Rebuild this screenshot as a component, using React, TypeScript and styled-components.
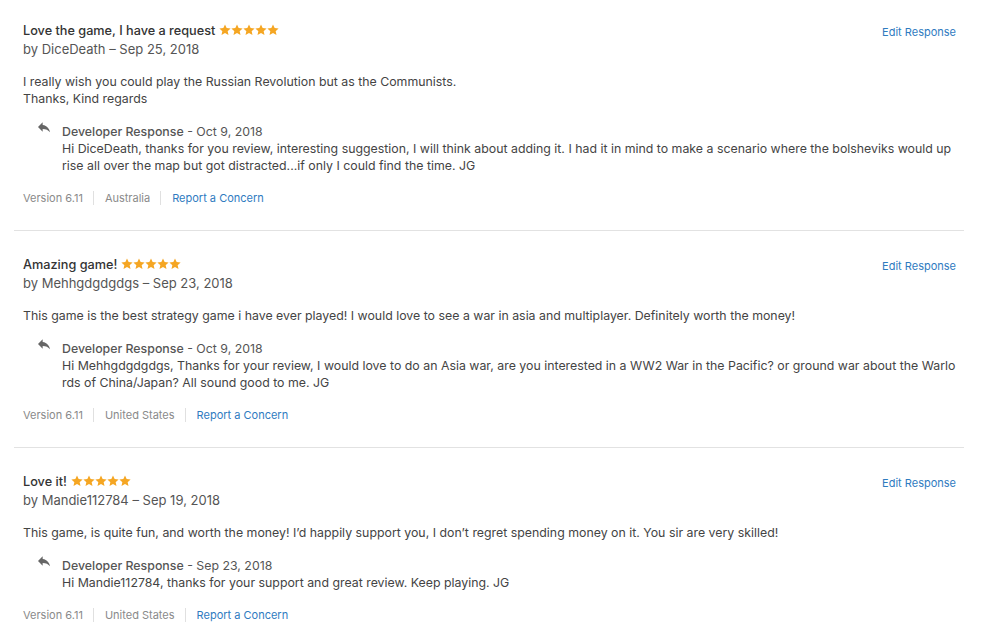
import React from 'react'
import styled, { createGlobalStyle } from 'styled-components'

const GlobalStyle = createGlobalStyle`
  body {
    margin: 0;
    background: #fff;
    font-family: Inter, "Open Sans", sans-serif;
    -webkit-font-smoothing: antialiased;
  }
`

const ListUI = styled.div`
  width: 950px;
  margin-left: 14px;
  padding-top: 22px;
`
const ReviewUI = styled.section`
  padding: 0 8px 24px 9px;
  border-bottom: 1px solid #e2e2e2;
  margin-bottom: 25px;
  &:last-child {
    border-bottom: none;
  }
`
const HeaderUI = styled.div`
  display: flex;
  justify-content: space-between;
  align-items: flex-start;
`
const TitleUI = styled.h3`
  margin: 0;
  font-size: 12.7px;
  line-height: 18px;
  font-weight: 500;
  color: #333;
  display: flex;
  align-items: center;
  gap: 4px;
`
const StarsUI = styled.span`
  display: inline-flex;
  margin-top: -3px;
`
const LinkUI = styled.a`
  font-size: 11px;
  color: #2f7bbf;
  text-decoration: none;
  line-height: 18px;
  margin-top: 1px;
  cursor: pointer;
`
const ByUI = styled.div`
  font-size: 13px;
  line-height: 19px;
  color: #555;
`
const BodyUI = styled.p`
  margin: 14px 0 0;
  font-size: 12.35px;
  line-height: 17px;
  color: #444;
  white-space: pre-line;
`
const ResponseUI = styled.div`
  display: flex;
  gap: 10px;
  margin-top: 16px;
  padding-left: 13px;
`
const ReplyIcon = styled.svg`
  width: 16px;
  height: 16px;
  flex-shrink: 0;
  margin-top: -4px;
`
const ResponseHeadUI = styled.div`
  font-size: 12.35px;
  line-height: 17px;
  color: #555;
  span {
    font-weight: 500;
  }
`
const ResponseTextUI = styled.div`
  font-size: 12.35px;
  line-height: 17px;
  color: #444;
  word-break: break-all;
`
const FooterUI = styled.div`
  display: flex;
  align-items: center;
  margin-top: 16px;
  font-size: 11px;
  line-height: 16px;
  color: #8a8a8a;
`
const MetaUI = styled.span`
  padding-right: 10px;
  margin-right: 11px;
  border-right: 1px solid #e0e0e0;
  line-height: 14px;
`
const ConcernUI = styled.a`
  color: #2f7bbf;
  cursor: pointer;
`

const Star = () => (
  <svg width="12" height="12" viewBox="0 0 24 24">
    <path
      fill="#f5a623"
      d="M12 1l3.3 7.2 7.9.8-5.9 5.3 1.7 7.8L12 18.1 5 22.1l1.7-7.8L.8 9l7.9-.8z"
    />
  </svg>
)

type Review = {
  title: string
  author: string
  date: string
  body: string
  responseDate: string
  response: string
  country: string
}

const reviews: Review[] = [
  {
    title: 'Love the game, I have a request',
    author: 'DiceDeath',
    date: 'Sep 25, 2018',
    body: 'I really wish you could play the Russian Revolution but as the Communists.\nThanks, Kind regards',
    responseDate: 'Oct 9, 2018',
    response:
      'Hi DiceDeath, thanks for you review, interesting suggestion, I will think about adding it. I had it in mind to make a scenario where the bolsheviks would up rise all over the map but got distracted...if only I could find the time. JG',
    country: 'Australia',
  },
  {
    title: 'Amazing game!',
    author: 'Mehhgdgdgdgs',
    date: 'Sep 23, 2018',
    body: 'This game is the best strategy game i have ever played! I would love to see a war in asia and multiplayer. Definitely worth the money!',
    responseDate: 'Oct 9, 2018',
    response:
      'Hi Mehhgdgdgdgs, Thanks for your review, I would love to do an Asia war, are you interested in a WW2 War in the Pacific? or ground war about the Warlords of China/Japan? All sound good to me. JG',
    country: 'United States',
  },
  {
    title: 'Love it!',
    author: 'Mandie112784',
    date: 'Sep 19, 2018',
    body: 'This game, is quite fun, and worth the money! I’d happily support you, I don’t regret spending money on it. You sir are very skilled!',
    responseDate: 'Sep 23, 2018',
    response: 'Hi Mandie112784, thanks for your support and great review. Keep playing. JG',
    country: 'United States',
  },
]

const ReviewCard = ({ review }: { review: Review }) => (
  <ReviewUI>
    <HeaderUI>
      <div>
        <TitleUI>
          {review.title}
          <StarsUI>
            {[0, 1, 2, 3, 4].map((i) => (
              <Star key={i} />
            ))}
          </StarsUI>
        </TitleUI>
        <ByUI>
          by {review.author} – {review.date}
        </ByUI>
      </div>
      <LinkUI>Edit Response</LinkUI>
    </HeaderUI>
    <BodyUI>{review.body}</BodyUI>
    <ResponseUI>
      <ReplyIcon viewBox="0 0 24 24">
        <path fill="#666" d="M10 9V5l-7 7 7 7v-4.1c5 0 8.5 1.6 11 5.1-1-5-4-10-11-11z" />
      </ReplyIcon>
      <div>
        <ResponseHeadUI>
          <span>Developer Response</span> - {review.responseDate}
        </ResponseHeadUI>
        <ResponseTextUI>{review.response}</ResponseTextUI>
      </div>
    </ResponseUI>
    <FooterUI>
      <MetaUI>Version 6.11</MetaUI>
      <MetaUI>{review.country}</MetaUI>
      <ConcernUI>Report a Concern</ConcernUI>
    </FooterUI>
  </ReviewUI>
)

export default function App() {
  return (
    <>
      <GlobalStyle />
      <ListUI>
        {reviews.map((r) => (
          <ReviewCard key={r.author} review={r} />
        ))}
      </ListUI>
    </>
  )
}
